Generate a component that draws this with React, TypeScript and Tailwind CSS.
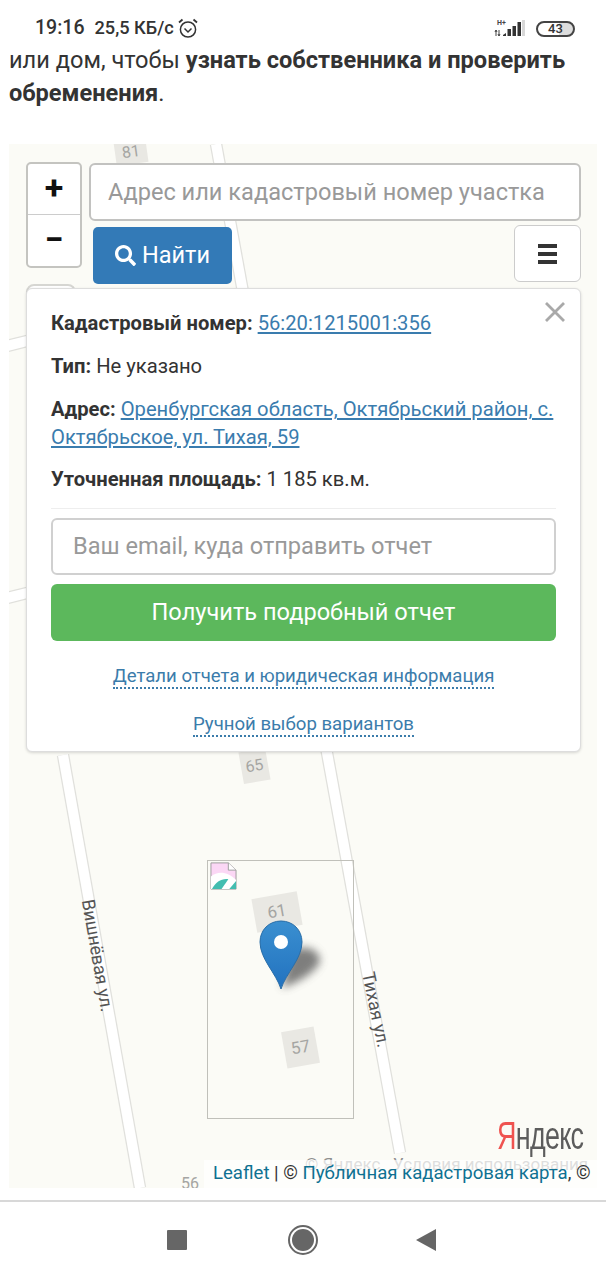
import React from "react";
import { FaSearch } from "react-icons/fa";

function Alarm() {
  return (
    <svg width="22" height="22" viewBox="0 0 22 22" fill="none" stroke="#333" strokeWidth="1.5">
      <circle cx="11" cy="12.5" r="7.6" />
      <path d="M7.5 11.5 L11 15 L14.5 11.5" />
      <path d="M2 5.5 L5.5 2.5 M20 5.5 L16.5 2.5" strokeWidth="1.8" />
    </svg>
  );
}

function Signal() {
  return (
    <svg width="32" height="22" viewBox="0 0 32 22">
      <text x="3" y="8" fontSize="7" fontWeight="700" fill="#444" fontFamily="Roboto, sans-serif">H+</text>
      <path d="M2 13v6M1 15l1-2 1 2M5 13v6M4 17l1 2 1-2" stroke="#444" strokeWidth="1" fill="none" />
      <path d="M9 19h3v-3l-3 2zM13.5 19h3.5v-7h-3.5zM18.500 19h3.500v-10h-3.500zM23.500 19h3.500v-14h-3.500z" fill="#333" />
      <rect x="28" y="3" width="3" height="16" fill="#d8d8d8" />
    </svg>
  );
}

function Marker() {
  return (
    <svg width="100" height="80" viewBox="0 0 100 80" className="overflow-visible">
      <defs>
        <linearGradient id="pin" x1="0" y1="0" x2="0" y2="1">
          <stop offset="0" stopColor="#3a8fd0" />
          <stop offset="1" stopColor="#2272bf" />
        </linearGradient>
        <filter id="blur" x="-50%" y="-50%" width="200%" height="200%"><feGaussianBlur stdDeviation="4" /></filter>
      </defs>
      <path d="M22 67 C36 62 56 52 60 40 C60 30 48 22 30 30 Z" fill="#555" opacity="0.75" filter="url(#blur)" />
      <path d="M21 68 C16 52 0 38 0 21 C0 9 9 0 21 0 C33 0 42 9 42 21 C42 38 26 52 21 68 Z" fill="url(#pin)" stroke="#2a6ea8" strokeWidth="1" />
      <circle cx="21" cy="21" r="7" fill="#fff" />
    </svg>
  );
}

function BrokenImage() {
  return (
    <svg width="27" height="28" viewBox="0 0 28 31" preserveAspectRatio="none">
      <path d="M1 1 H19 L27 9 V30 H1 Z" fill="#fbd7f5" stroke="#9a9a9a" strokeWidth="1" />
      <path d="M19 1 V9 H27" fill="#fff" stroke="#9a9a9a" strokeWidth="1" />
      <path d="M1 16 C8 10 18 10 27 20 V30 H1 Z" fill="#fff" />
      <path d="M2 30 C6 22 12 18 19 19 L12 30 Z" fill="#43bdb0" />
      <path d="M20 30 L27 21 V30 Z" fill="#43bdb0" />
    </svg>
  );
}

function HouseLabel({ n, className, text }: { n: string; className: string; text: string }) {
  return (
    <div className={`absolute flex items-center justify-center bg-[#e9e8e3] text-[#a5a5a2] ${text} ${className}`}>
      {n}
    </div>
  );
}

function MapArt() {
  const road = (x1: number, y1: number, x2: number, y2: number, key: string) => (
    <g key={key}>
      <line x1={x1} y1={y1} x2={x2} y2={y2} stroke="#e0e0dc" strokeWidth="12.500" />
      <line x1={x1} y1={y1} x2={x2} y2={y2} stroke="#ffffff" strokeWidth="10" />
    </g>
  );
  return (
    <svg width="588" height="1044" viewBox="0 0 588 1044" className="absolute left-0 top-0">
      {road(207, 0, 391, 1009, "tikh")}
      {road(54, 611, 131, 1044, "vish")}
      {road(-2, 202, 30, 194, "a")}
      {road(-2, 454, 30, 446, "b")}
    </svg>
  );
}

export default function App() {
  return (
    <div className="flex h-[1280px] w-[606px] flex-col overflow-hidden bg-white font-['Roboto',sans-serif]">
      <div className="flex h-[44px] shrink-0 items-end justify-between pb-[5px] pl-[35px] pr-[31px]">
        <div className="flex items-center font-medium leading-[22px] text-[#333]">
          <span className="text-[19.500px]">19:16</span>
          <span className="ml-[10px] text-[18.200px]">25,5 КБ/с</span>
          <span className="ml-[3px]"><Alarm /></span>
        </div>
        <div className="flex items-center gap-[10px]">
          <Signal />
          <div className="relative mt-[2px] flex h-[16px] w-[39px] items-center justify-center overflow-hidden rounded-full border-2 border-[#444] bg-[linear-gradient(90deg,#fff_60%,#ddd_60%)] text-[13px] font-medium text-[#333]">
            43
          </div>
        </div>
      </div>

      <p className="mx-[9px] h-[100px] shrink-0 text-[23.600px] leading-[33px] text-[#333]">
        или дом, чтобы <b className="font-bold">узнать собственника и проверить обременения</b>.
      </p>

      <div className="relative ml-[9px] h-[1044px] w-[588px] shrink-0 overflow-hidden bg-[#fbfbf6]">
        <MapArt />

        <HouseLabel n="81" className="left-[106px] top-[-4px] h-[24px] w-[32px] -rotate-[8deg]" text="text-[16px]" />
        <HouseLabel n="65" className="left-[232px] top-[606px] h-[32px] w-[27px] -rotate-[10deg]" text="text-[16px]" />
        <HouseLabel n="61" className="left-[245px] top-[751px] h-[34px] w-[46px] -rotate-[10deg]" text="text-[17px]" />
        <HouseLabel n="57" className="left-[275px] top-[885px] h-[37px] w-[33px] -rotate-[10deg]" text="text-[17px]" />
        <span className="absolute left-[172px] top-[1029px] text-[16px] leading-[22px] text-[#a5a5a2]">56</span>

        <span className="absolute left-[32px] top-[798px] origin-center rotate-[80deg] whitespace-nowrap text-[18px] text-[#555]">
          Вишнёвая ул.
        </span>
        <span className="absolute left-[329px] top-[852px] origin-center rotate-[78deg] whitespace-nowrap text-[18px] text-[#555]">
          Тихая ул.
        </span>

        <div className="absolute left-[198px] top-[716px] h-[259px] w-[147px] border border-[#c0c0ba]">
          <div className="ml-[2px] mt-[1px]"><BrokenImage /></div>
        </div>

        <div className="absolute left-[251px] top-[777px]"><Marker /></div>

        <div className="absolute left-[488px] top-[969px] whitespace-nowrap text-[39px] leading-[46px] tracking-[-1px] text-[#5c5c5c] [font-family:'Liberation_Sans',sans-serif] origin-left scale-x-[0.69]">
          <span className="text-[#ef5350]">Я</span>ндекс
        </div>

        <div className="absolute left-[296px] top-[1009px] whitespace-nowrap text-[17px] leading-[22px] text-[#8f8f8f]">
          © Яндекс&nbsp;&nbsp;&nbsp;Условия использования
        </div>

        <div className="absolute left-[195px] top-[1016px] h-[28px] w-[393px] whitespace-nowrap bg-white/70 pl-[9px] text-[18.600px] leading-[26px] text-[#333]">
          <span className="text-[#0f7192]">Leaflet</span> | © <span className="text-[#0f7192]">Публичная кадастровая карта</span>, ©
        </div>

        {/* controls over the map */}
        <div className="absolute left-[17px] top-[18px] flex h-[106px] w-[56px] flex-col overflow-hidden rounded-[5px] border-2 border-[#c4c4c0] bg-white text-[#111]">
          <div className="flex h-[51px] items-center justify-center border-b border-[#ccc] pb-[4px] text-[34px] font-bold leading-none">+</div>
          <div className="flex flex-1 items-center justify-center pb-[4px] text-[34px] font-bold leading-none">−</div>
        </div>
        <div className="absolute left-[17px] top-[140px] h-[30px] w-[50px] rounded-t-[8px] border-2 border-[#d6d6d2] bg-white" />

        <div className="absolute left-[80px] top-[19px] flex h-[58px] w-[492px] items-center rounded-[6px] border-2 border-[#c2c2c0] bg-white pl-[17px] pt-[1px] text-[23.600px] text-[#999]">
          Адрес или кадастровый номер участка
        </div>

        <div className="absolute left-[84px] top-[83px] flex h-[57px] w-[139px] items-center justify-center gap-[6px] rounded-[5px] bg-[#337ab7] text-[23.500px] text-white">
          <FaSearch className="text-[21px]" />
          Найти
        </div>

        <div className="absolute left-[505px] top-[81px] flex h-[57px] w-[67px] flex-col items-center justify-center gap-[4px] rounded-[6px] border border-[#ccc] bg-white">
          <span className="block h-[4px] w-[19px] bg-[#333]" />
          <span className="block h-[4px] w-[19px] bg-[#333]" />
          <span className="block h-[4px] w-[19px] bg-[#333]" />
        </div>

        {/* popup */}
        <div className="absolute left-[17px] top-[144px] h-[464px] w-[555px] rounded-[6px] border border-[#ddd] bg-white px-[24px] pt-[20px] text-[20.200px] text-[#333] shadow-[0_1px_3px_rgba(0,0,0,0.15)]">
          <svg width="22" height="22" viewBox="0 0 22 22" className="absolute right-[14px] top-[12px]" stroke="#a9a9a9" strokeWidth="2.800">
            <path d="M2 2 L20 20 M20 2 L2 20" />
          </svg>
          <div className="flex flex-col gap-[15px] leading-[28px]">
            <p><b className="font-bold">Кадастровый номер:</b> <a className="text-[#3a7cae] underline">56:20:1215001:356</a></p>
            <p><b className="font-bold">Тип:</b> Не указано</p>
            <p><b className="font-bold">Адрес:</b> <a className="text-[#3a7cae] underline">Оренбургская область, Октябрьский район, с. Октябрьское, ул. Тихая, 59</a></p>
            <p className="-mt-[1px]"><b className="font-bold">Уточненная площадь:</b> 1 185 кв.м.</p>
          </div>
          <div className="mt-[15px] border-t border-[#eee]" />
          <div className="mt-[9px] flex h-[57px] items-center rounded-[6px] border-2 border-[#d0d0d0] bg-white pl-[20px] text-[23.600px] text-[#999]">
            Ваш email, куда отправить отчет
          </div>
          <div className="mt-[9px] flex h-[57px] items-center justify-center rounded-[6px] bg-[#5cb85c] text-[23.600px] text-white">
            Получить подробный отчет
          </div>
          <div className="mt-[24px] flex flex-col items-center gap-[24px] text-[#3b7cab]">
            <a className="border-b-2 border-dotted border-[#3b7cab] text-[18.600px] leading-[22px]">Детали отчета и юридическая информация</a>
            <a className="border-b-2 border-dotted border-[#3b7cab] text-[18.600px] leading-[22px]">Ручной выбор вариантов</a>
          </div>
        </div>
      </div>

      <div className="mt-[12px] flex flex-1 items-center justify-center border-t-2 border-[#d8d8d8] pb-[2px] pr-[4px]">
        <div className="flex items-center gap-[101px]">
          <div className="h-[20px] w-[20px] rounded-[1px] bg-[#666]" />
          <div className="-mr-[3px] flex h-[30px] w-[30px] items-center justify-center rounded-full border-2 border-[#666] bg-white">
            <div className="h-[22px] w-[22px] rounded-full bg-[#666]" />
          </div>
          <svg width="20" height="24" viewBox="0 0 20 24"><path d="M0 12 L20 1 V23 Z" fill="#666" /></svg>
        </div>
      </div>
    </div>
  );
}
